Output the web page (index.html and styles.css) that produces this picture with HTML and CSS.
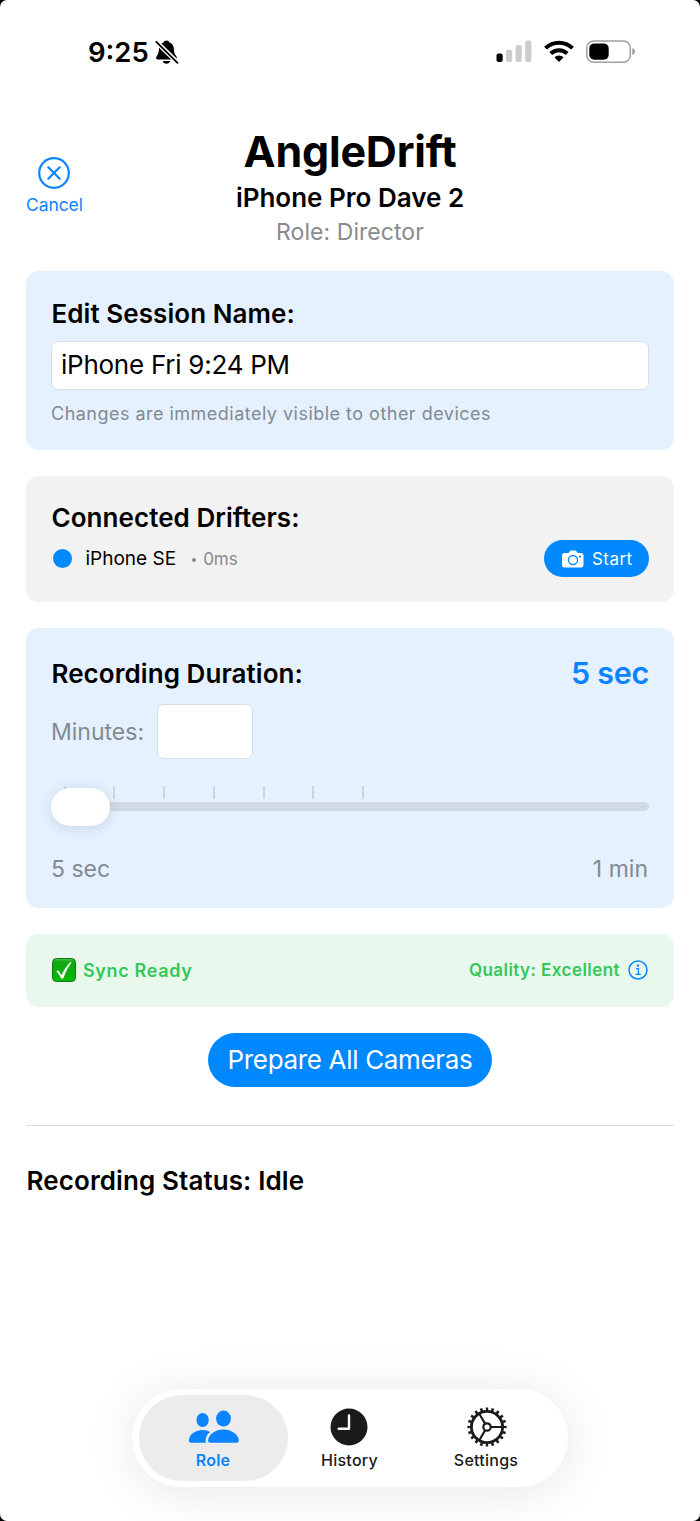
FILE: index.html
```html
<!DOCTYPE html>
<html lang="en">
<head>
  <meta charset="UTF-8" />
  <meta name="viewport" content="width=device-width, initial-scale=1.0"/>
  <title>AngleDrift</title>
  <link rel="stylesheet" href="styles.css">
</head>
<body>
  <div class="screen">
    <div class="status-bar">
      <span class="time">9:25</span>
      <svg class="bell" viewBox="0 0 24 26" width="24" height="26">
        <path d="M11.500 1.500c-1.600 0-2.700.9-3 2.100C5.300 4.700 4 7.200 3.900 10.200c-.1 3.400-.8 5-2.100 6.700-1.100 1.500-.9 3.600 1 3.600h17.400c1.900 0 2.100-2.100 1-3.600-1.500-1.700-2.200-3.300-2.300-6.700C18.800 7.200 17.500 4.700 14.500 3.600c-.3-1.200-1.400-2.100-3-2.100z"/>
        <path d="M7.800 22h7.400c-.4 1.700-1.800 2.700-3.700 2.700S8.200 23.700 7.800 22z"/>
        <path d="M0 1.500l23.500 23" stroke="#fff" stroke-width="4.600"/>
        <path d="M1.300 2.800l21.200 21" stroke="#000" stroke-width="1.800" stroke-linecap="round"/>
      </svg>
      <svg class="signal" viewBox="0 0 36 22" width="36" height="22">
        <rect x="0.500" y="13.500" width="6.200" height="8.500" rx="2"/>
        <rect x="10" y="9.800" width="6.200" height="12.200" rx="2" fill="#ccc"/>
        <rect x="19.600" y="5" width="6.200" height="17" rx="2" fill="#ccc"/>
        <rect x="29.200" y="0.500" width="6.200" height="21.500" rx="2" fill="#ccc"/>
      </svg>
      <svg class="wifi" viewBox="0 0 30 22" width="30" height="22" fill="none" stroke="#000" stroke-width="4">
        <path d="M1.500 8.200a19.200 19.200 0 0 1 27 0"/>
        <path d="M6.800 13.500a11.700 11.700 0 0 1 16.400 0"/>
        <path d="M15 22l-4.600-4.700a6.500 6.500 0 0 1 9.200 0z" fill="#000" stroke="none"/>
      </svg>
      <svg class="battery" viewBox="0 0 50 24" width="50" height="24">
        <rect x="0.800" y="0.900" width="43.500" height="21.400" rx="7" fill="none" stroke="#a0a0a0" stroke-width="1.500"/>
        <rect x="3.300" y="3.400" width="19.400" height="16.300" rx="5"/>
        <path d="M46.300 8.300c1.800.6 2.700 1.800 2.700 3.300s-.9 2.700-2.700 3.300z" fill="#999"/>
      </svg>
    </div>

    <header class="header">
      <a class="cancel">
        <svg viewBox="0 0 32 32" width="32" height="32" fill="none" stroke="#0a84ff" stroke-width="2.200" stroke-linecap="round">
          <circle cx="16" cy="16" r="14.800"/>
          <path d="M10.300 10.300l11.400 11.400M21.700 10.300L10.300 21.700"/>
        </svg>
        <span>Cancel</span>
      </a>
      <h1>AngleDrift</h1>
      <p class="device">iPhone Pro Dave 2</p>
      <p class="role">Role: Director</p>
    </header>

    <main class="content">
      <section class="card blue">
        <h2>Edit Session Name:</h2>
        <div class="field session-field">iPhone Fri 9:24 PM</div>
        <p class="hint">Changes are immediately visible to other devices</p>
      </section>

      <section class="card gray">
        <h2>Connected Drifters:</h2>
        <div class="drifter">
          <i class="dot"></i>
          <span class="drifter-name">iPhone SE</span>
          <span class="bullet"></span>
          <span class="latency">0ms</span>
          <a class="start">
            <svg viewBox="0 0 22 18" width="22" height="18">
              <path fill="#fff" d="M2.600 3h3.200c.5 0 .8-.2 1.100-.6l.8-1C8.100.8 8.600.6 9.200.6h3.900c.6 0 1.100.2 1.500.8l.8 1c.3.4.6.6 1.100.6h2.400c1.600 0 2.600.9 2.600 2.500v9.600c0 1.600-1 2.500-2.600 2.500H2.600C1 17.600 0 16.700 0 15.100V5.500C0 3.900 1 3 2.600 3z"/>
              <circle cx="11" cy="10" r="4.500" fill="none" stroke="#08f" stroke-width="1.300"/>
              <circle cx="18" cy="6.500" r="1.100" fill="#08f"/>
            </svg>
            <span>Start</span>
          </a>
        </div>
      </section>

      <section class="card blue duration">
        <div class="row">
          <h2>Recording Duration:</h2>
          <span class="value">5 sec</span>
        </div>
        <div class="row minutes">
          <label>Minutes:</label>
          <div class="field minutes-field"></div>
        </div>
        <div class="slider">
          <div class="ticks"><i></i><i></i><i></i><i></i><i></i><i></i><i></i></div>
          <div class="track"></div>
          <div class="thumb"></div>
        </div>
        <div class="row range">
          <span>5 sec</span>
          <span>1 min</span>
        </div>
      </section>

      <section class="card green">
        <svg class="check" viewBox="0 0 24 24" width="24" height="24">
          <defs>
            <linearGradient id="g" x1="0" y1="0" x2="0" y2="1">
              <stop offset="0" stop-color="#4fc24f"/>
              <stop offset=".15" stop-color="#12a812"/>
              <stop offset="1" stop-color="#04bc04"/>
            </linearGradient>
          </defs>
          <rect x="0.500" y="0.500" width="23" height="23" rx="4" fill="url(#g)" stroke="#0b7c14"/>
          <path d="M4.300 13.200c.9-1 2.300-.8 3 .3l2.200 3.700C11.800 12.300 14.500 8 18 4.300c.6-.5 1.500-.2 1.200.6-3.400 4.400-5.600 9.300-7.700 15-.5 1-2.100 1-2.600 0-1.300-2.700-2.700-4.700-4.600-6.700z" fill="#fff"/>
        </svg>
        <span class="sync">Sync Ready</span>
        <span class="quality">Quality: Excellent</span>
        <svg class="info" viewBox="0 0 20 20" width="20" height="20" fill="none" stroke="#0a84ff" stroke-width="1.500">
          <circle cx="10" cy="10" r="9"/>
          <path d="M8 8.600h2.400v5.600M7.600 14.300h5.200" stroke-width="1.300"/>
          <circle cx="10" cy="5.500" r="1.200" fill="#0a84ff" stroke="none"/>
        </svg>
      </section>

      <a class="prepare">Prepare All Cameras</a>
      <hr>
      <p class="recording-status">Recording Status: Idle</p>
    </main>

    <nav class="tab-bar">
      <a class="tab active">
        <svg class="people" viewBox="0 0 50 38" width="50" height="38" fill="#0a84ff">
          <ellipse cx="13.600" cy="12" rx="6.200" ry="7"/>
          <path d="M2.500 34.800C.8 34.800 0 34 0 32.400 0 27.300 5.400 22 13.600 22c3 0 5.500.7 7.600 2-3 2.200-4.600 5.300-4.600 8.200 0 1 .1 1.900.6 2.600z"/>
          <ellipse cx="34.500" cy="10.600" rx="7.400" ry="8"/>
          <path d="M22 34.800c-2 0-2.900-.8-2.900-2.300 0-4.900 6-11 15.300-11s15.300 6.100 15.300 11c0 1.500-.9 2.300-2.900 2.300z"/>
        </svg>
        <span>Role</span>
      </a>
      <a class="tab">
        <svg class="clock" viewBox="0 0 38 38" width="38" height="38">
          <circle cx="19" cy="19" r="18.500" fill="#1a1a1a"/>
          <path d="M19 7.500v13.300H8.700" fill="none" stroke="#fff" stroke-width="2.400" stroke-linecap="round" stroke-linejoin="round"/>
        </svg>
        <span>History</span>
      </a>
      <a class="tab">
        <svg class="gear" viewBox="0 0 40 40" width="40" height="40" fill="none" stroke="#1a1a1a">
          <circle cx="20" cy="20" r="18" stroke-width="3.200" pathLength="200" stroke-dasharray="4.400 5.600" stroke-dashoffset="2.200"/>
          <circle cx="20" cy="20" r="15.600" stroke-width="2.800"/>
          <circle cx="20" cy="20" r="3.700" stroke-width="2.200"/>
          <path d="M24 20h12M18 16.500l-6-10.300M18 23.500l-6 10.300" stroke-width="2.200"/>
        </svg>
        <span>Settings</span>
      </a>
    </nav>
  </div>
</body>
</html>
```
FILE: styles.css
```css
body {
  margin: 0;
  background-color: #000;
  font-family: Inter, "Liberation Sans", sans-serif;
  color: #000;
}
h1, h2, p {
  margin: 0;
}
svg {
  display: block;
  flex: none;
}
.screen {
  position: relative;
  height: 1521px;
  background-color: #fff;
  border-radius: 7px;
  overflow: hidden;
}

/* status bar */
.status-bar {
  display: flex;
  align-items: center;
  height: 104px;
  padding: 0 64px 0 88px;
}
.time {
  font-size: 27.5px;
  font-weight: 600;
}
.bell {
  margin-left: 6px;
}
.signal {
  margin: 0 0 2px auto;
}
.wifi {
  margin: 0 12.5px 2px 11.5px;
}
.battery {
  margin-bottom: 1px;
}

/* header */
.header {
  position: relative;
  height: 167px;
  text-align: center;
}
.cancel {
  position: absolute;
  left: 26px;
  top: 53px;
  display: flex;
  flex-direction: column;
  align-items: center;
  gap: 5px;
  color: #0a84ff;
  font-size: 17.5px;
  line-height: 22px;
  letter-spacing: -0.1px;
}
h1 {
  padding-top: 21px;
  font-size: 43px;
  font-weight: 700;
  line-height: 52px;
  letter-spacing: -0.2px;
}
.device {
  padding-top: 4px;
  font-size: 26px;
  font-weight: 600;
  line-height: 34px;
}
.role {
  color: #8a8a8e;
  font-size: 23px;
  line-height: 34px;
  letter-spacing: 0.05px;
}

/* cards */
.content {
  display: flex;
  flex-direction: column;
  gap: 26px;
  padding: 0 26px;
}
.card {
  box-sizing: border-box;
  padding: 26px 25px 25px;
  border-radius: 13px;
}
.blue {
  background-color: #e5f1fe;
  height: 179px;
}
.gray {
  background-color: #f2f2f2;
  height: 126px;
  padding-top: 25px;
}
.green {
  display: flex;
  align-items: center;
  height: 73px;
  padding: 0 26px 1px;
  background-color: #e9f8ed;
  color: #34c759;
  font-weight: 600;
}
h2 {
  padding-left: 0.5px;
  font-size: 26px;
  font-weight: 600;
  line-height: 33px;
  letter-spacing: 0.06px;
}
.field {
  box-sizing: border-box;
  background-color: #fff;
  border: 1px solid #d8dee5;
  border-radius: 7px;
}
.session-field {
  height: 49px;
  margin-top: 11px;
  padding-left: 9px;
  font-size: 26px;
  line-height: 46px;
  letter-spacing: -0.25px;
}
.hint {
  margin-top: 10px;
  color: #828a93;
  font-size: 18px;
  line-height: 28px;
  letter-spacing: 0.48px;
}

.drifter {
  display: flex;
  align-items: center;
  height: 37px;
  margin-top: 6px;
}
.dot {
  width: 19px;
  height: 19px;
  margin: 0 14px 0 1.5px;
  border-radius: 50%;
  background-color: #08f;
}
.drifter-name {
  font-size: 19px;
}
.bullet {
  width: 4px;
  height: 4px;
  margin: 2px 7.5px 0 15.5px;
  border-radius: 50%;
  background-color: #8a8a8e;
}
.latency {
  color: #8a8a8e;
  font-size: 17px;
}
.start {
  display: flex;
  align-items: center;
  box-sizing: border-box;
  width: 105px;
  height: 37px;
  margin-left: auto;
  padding-left: 18px;
  gap: 8px;
  border-radius: 19px;
  background-color: #08f;
  color: #fff;
  font-size: 17px;
  letter-spacing: 0.45px;
}

.duration {
  height: 280px;
}
.row {
  display: flex;
  align-items: center;
  justify-content: space-between;
  height: 39px;
}
.value {
  padding-bottom: 2px;
  color: #0a84ff;
  font-size: 30.5px;
  font-weight: 600;
  letter-spacing: -0.3px;
}
.minutes {
  justify-content: flex-start;
  gap: 13px;
  height: 55px;
  margin-top: 11px;
  color: #828a93;
  font-size: 23px;
}
.minutes-field {
  width: 96px;
  height: 55px;
}
.slider {
  position: relative;
  height: 96px;
}
.ticks {
  display: flex;
  justify-content: space-between;
  width: 300.5px;
  padding: 27px 0 3px 12.5px;
}
.ticks i {
  width: 2px;
  height: 13px;
  background-color: #cdd6df;
}
.track {
  height: 9px;
  border-radius: 5px;
  background-color: #cfdae5;
}
.thumb {
  position: absolute;
  left: 0;
  top: 29px;
  width: 59px;
  height: 38px;
  border-radius: 19px;
  background-color: #fff;
  box-shadow: 0 2px 14px rgba(0, 40, 80, 0.14);
}
.range {
  height: 27px;
  padding-right: 1px;
  color: #828a93;
  font-size: 23px;
}

.sync {
  margin-left: 7px;
  font-size: 18px;
  letter-spacing: 0.65px;
}
.quality {
  margin-left: auto;
  font-size: 17px;
  letter-spacing: 0.44px;
}
.info {
  margin-left: 8px;
}

.prepare {
  align-self: center;
  width: 284px;
  height: 54px;
  border-radius: 27px;
  background-color: #08f;
  color: #fff;
  font-size: 26px;
  line-height: 54px;
  letter-spacing: -0.33px;
  text-align: center;
}
hr {
  width: 100%;
  height: 1px;
  margin: 12px 0 0;
  border: 0;
  background-color: #dcdcde;
}
.recording-status {
  margin-top: 12px;
  padding-left: 0.5px;
  font-size: 26px;
  font-weight: 600;
  line-height: 34px;
  letter-spacing: 0.1px;
}

/* tab bar */
.tab-bar {
  position: absolute;
  left: 132px;
  top: 1389px;
  display: flex;
  box-sizing: border-box;
  width: 436px;
  height: 98px;
  padding: 6px 6.5px;
  border-radius: 49px;
  background-color: #fff;
  box-shadow: 0 4px 50px rgba(0, 0, 0, 0.1);
}
.tab {
  display: flex;
  flex-direction: column;
  align-items: center;
  justify-content: space-between;
  box-sizing: border-box;
  flex: none;
  width: 149px;
  margin-right: -12.5px;
  height: 86px;
  padding: 13px 0 11px;
  border-radius: 43px;
  color: #1a1a1a;
  font-size: 16px;
  font-weight: 500;
  line-height: 20px;
  letter-spacing: 0.25px;
}
.active {
  background-color: #ececec;
  color: #0a84ff;
  font-weight: 600;
}
.people {
  margin-left: 2px;
}
.clock {
  margin-right: 1px;
}
.gear {
  margin: -1px 0 0 2px;
}
```
